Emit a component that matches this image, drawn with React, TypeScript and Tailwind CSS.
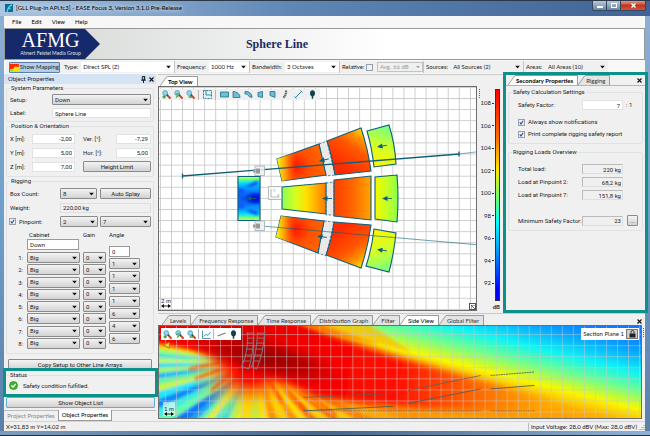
import React from "react";

const TEAL = "#0f5f78";

/* ---------- shared controls ---------- */

function Caret() {
  return (
    <svg className="pointer-events-none absolute right-[3px] top-1/2 h-[3px] w-[5px] -translate-y-1/2" viewBox="0 0 5 3" aria-hidden="true">
      <path d="M0 0h5L2.5 3z" fill="#111" />
    </svg>
  );
}

function Combo({ value, label, className = "" }: { value: string; label: string; className?: string }) {
  return (
    <span className={"relative block h-[11px] " + className}>
      <select
        aria-label={label}
        defaultValue={value}
        className="block h-full w-full appearance-none rounded-[1px] border border-[#8b8b8b] bg-linear-to-b from-[#f3f3f3] to-[#d3d3d3] pl-[2px] leading-[8px] text-[#222]"
      >
        <option>{value}</option>
      </select>
      <Caret />
    </span>
  );
}

function Field({ id, label, value, dark = false, className = "" }: { id?: string; label?: string; value: string; dark?: boolean; className?: string }) {
  return (
    <input
      id={id}
      aria-label={label}
      defaultValue={value}
      className={"block min-w-0 border bg-white px-[2px] leading-[8px] text-[#222] " + (dark ? "h-[11px] border-[#9a9a9a] " : "h-[10px] border-[#e0e3e6] ") + className}
    />
  );
}

function Push({ children, className = "border-[#8b8b8b]" }: { children: React.ReactNode; className?: string }) {
  return (
    <button
      type="button"
      className={"h-[11px] rounded-[1px] border bg-linear-to-b from-[#f4f4f4] to-[#d2d2d2] text-center leading-[9px] text-[#222] " + className}
    >
      {children}
    </button>
  );
}

function Tick({ id, checked = true }: { id: string; checked?: boolean }) {
  return (
    <span className="relative block size-[7px] shrink-0">
      <input id={id} type="checkbox" defaultChecked={checked} className="peer block size-[7px] appearance-none border border-[#9aa0a8] bg-[#eef0f3]" />
      <svg className="pointer-events-none absolute inset-0 hidden size-[7px] peer-checked:block" viewBox="0 0 7 7" aria-hidden="true">
        <path d="M1.8 3.4 3 5 5.2 1.7" fill="none" stroke="#2f4f9c" strokeWidth="1.1" />
      </svg>
    </span>
  );
}

function Group({ title, children, className = "", inner = "" }: { title: string; children: React.ReactNode; className?: string; inner?: string }) {
  return (
    <fieldset className={"min-w-0 rounded-[2px] border border-[#dfe2e5] " + className}>
      <legend className="ml-[3px] px-px leading-[8px]">{title}</legend>
      <div className={inner}>{children}</div>
    </fieldset>
  );
}

function Tab({ children, active = false, bold = false }: { children: React.ReactNode; active?: boolean; bold?: boolean }) {
  return (
    <button type="button" role="tab" aria-selected={active} className="flex h-[10px] items-stretch">
      <svg className="-mr-px h-[10px] w-[8px]" viewBox="0 0 8 10" aria-hidden="true">
        <path d="M0 10 6.500 1Q7 .5 8 .5V10z" fill={active ? "#fff" : "#e4e4e4"} />
        <path d="M0 10 6.500 1Q7 .5 8 .5" fill="none" stroke="#8c8c8c" strokeWidth=".8" />
      </svg>
      <span
        className={
          "rounded-tr-[1px] border-t border-r border-[#9a9a9a] pr-[4px] pl-px leading-[9px] " +
          (active ? "bg-white text-black " : "bg-[#e4e4e4] text-[#333] ") +
          (bold ? "font-bold" : "")
        }
      >
        {children}
      </span>
    </button>
  );
}

function CloseButton() {
  return (
    <button type="button" aria-label="Close" className="flex size-[8px] items-center justify-center">
      <svg className="size-[5px]" viewBox="0 0 5 5" aria-hidden="true">
        <path d="M.5.5l4 4M4.500.5l-4 4" stroke="#111" strokeWidth="1.1" />
      </svg>
    </button>
  );
}

/* ---------- tool icons ---------- */

function ToolButton({ label, children }: { label: string; children: React.ReactNode }) {
  return (
    <button type="button" aria-label={label} className="flex h-[11px] w-[12px] items-center justify-center">
      <svg className="size-[9px]" viewBox="0 0 9 9" aria-hidden="true">
        {children}
      </svg>
    </button>
  );
}

function Lens({ mark }: { mark: "plus" | "fit" | "minus" }) {
  return (
    <>
      <path d="M5 5 8 8" stroke="#c5482e" strokeWidth="1.9" strokeLinecap="round" />
      <path d="M4.800 4.500 5.800 5.600" stroke="#3b3b3b" strokeWidth="1.5" />
      <circle cx="3.200" cy="3" r="2.400" fill="#8fd8ea" stroke="#4a9db5" strokeWidth=".8" />
      {mark === "plus" && <path d="M.5 6.800h3.400M2.200 5.200v3.300" stroke="#2f9a36" strokeWidth="1.3" />}
      {mark === "fit" && <path d="M1.500 4.800l3-1.500M2 7.500l3-2.500" stroke="#43a548" strokeWidth="1.1" />}
      {mark === "minus" && <path d="M2.600 7h3.600" stroke="#2f9a36" strokeWidth="1.4" />}
    </>
  );
}

function Mic() {
  return <path d="M4.500.3C6.300.3 7 1.700 7 3.300 7 5 6.200 6 5.200 6.400V8.700H3.800V6.400C2.800 6 2 5 2 3.300 2 1.700 2.700.3 4.500.3z" fill="#123f52" />;
}

const SHAPES: { label: string; d: string }[] = [
  { label: "Rectangle area", d: "M.5 2h8v5h-8z" },
  { label: "Quarter disc area", d: "M1 1.500c4 0 7 2.500 7 6H1z" },
  { label: "Ring area", d: "M1 1.500c4.500-.5 7 2.500 7 6L5 6.500C4.500 5 3 4 1 4z" },
  { label: "Left trapezoid area", d: "M2 2.500 6.500 1.500v6L2 6.500z" },
  { label: "Right trapezoid area", d: "M2 1.500h5v6L2 5.500z" },
];

function Divider() {
  return <span className="mx-[2px] h-[10px] w-px bg-[#b5b5b5]" />;
}

/* ---------- top view ---------- */

type Cell = { d: string; fill: string };

const CELLS: Cell[] = [
  { d: "M277 158 319 143 326 174 282 180z", fill: "url(#hotTop)" },
  { d: "M282 186 326 182V213L282 208z", fill: "url(#hotMid)" },
  { d: "M281 215 324 220 318 252 276 236z", fill: "url(#hotLow)" },
  { d: "M327 140 361 127Q368 148 371 170L335 174Q332 155 327 140z", fill: "url(#midTop)" },
  { d: "M334 179 371 175V219L334 215z", fill: "url(#midMid)" },
  { d: "M334 221 371 224Q368 246 361 267L326 254Q332 238 334 221z", fill: "url(#midLow)" },
  { d: "M367 130 389 124Q395 143 396 163L374 166Q372 147 367 130z", fill: "url(#farTop)" },
  { d: "M375 176 397 174Q399 197 397 221L375 218z", fill: "url(#farMid)" },
  { d: "M374 228 396 232Q394 252 389 271L366 265Q372 247 374 228z", fill: "url(#farLow)" },
];

const ARROWS: [number, number, number][] = [
  [246, 197.5, 0],
  [322, 197.5, 0],
  [319, 160, -12],
  [317, 235, 8],
  [377, 146, -10],
  [382, 197.5, 0],
  [377, 248.500, 8],
];

function TopView() {
  return (
    <svg className="absolute inset-0 size-full" viewBox="158 86 319 223" preserveAspectRatio="xMidYMid slice" role="img" aria-label="Top view sound pressure map">
      <defs>
        <pattern id="topGrid" x="171" y="97" width="11.070" height="11.100" patternUnits="userSpaceOnUse">
          <path d="M.5 0V11.100M0 .5H11.070" stroke="#c9c9c9" strokeWidth=".9" />
        </pattern>
        <radialGradient id="hotTop" gradientUnits="userSpaceOnUse" cx="296" cy="165" r="36">
          <stop offset="0" stopColor="#ff1800" />
          <stop offset=".4" stopColor="#ff5000" />
          <stop offset="1" stopColor="#ff7000" />
        </radialGradient>
        <linearGradient id="hotEdge">
          <stop offset="0" stopColor="#f4ff20" />
          <stop offset=".18" stopColor="#ffb000" stopOpacity=".8" />
          <stop offset=".38" stopColor="#ff6000" stopOpacity="0" />
        </linearGradient>
        <radialGradient id="hotLow" gradientUnits="userSpaceOnUse" cx="296" cy="228" r="36">
          <stop offset="0" stopColor="#ff1800" />
          <stop offset=".4" stopColor="#ff5000" />
          <stop offset="1" stopColor="#ff7000" />
        </radialGradient>
        <linearGradient id="hotMid">
          <stop offset="0" stopColor="#8cff5a" />
          <stop offset=".3" stopColor="#d4ff20" />
          <stop offset=".55" stopColor="#ffe000" />
          <stop offset="1" stopColor="#ff7a00" />
        </linearGradient>
        <linearGradient id="midTop" gradientUnits="userSpaceOnUse" x1="338" y1="164" x2="364" y2="128">
          <stop offset="0" stopColor="#ff2a00" />
          <stop offset=".5" stopColor="#ff5500" />
          <stop offset=".8" stopColor="#ff9c00" />
          <stop offset="1" stopColor="#ffee00" />
        </linearGradient>
        <linearGradient id="midMid">
          <stop offset="0" stopColor="#ff3e00" />
          <stop offset=".5" stopColor="#ff6500" />
          <stop offset="1" stopColor="#ffa600" />
        </linearGradient>
        <linearGradient id="midLow" gradientUnits="userSpaceOnUse" x1="338" y1="230" x2="364" y2="266">
          <stop offset="0" stopColor="#ff2a00" />
          <stop offset=".5" stopColor="#ff5500" />
          <stop offset=".8" stopColor="#ff9c00" />
          <stop offset="1" stopColor="#ffee00" />
        </linearGradient>
        <linearGradient id="farTop" gradientUnits="userSpaceOnUse" x1="374" y1="166" x2="388" y2="124">
          <stop offset="0" stopColor="#fff200" />
          <stop offset=".5" stopColor="#d2ff28" />
          <stop offset="1" stopColor="#70ff8c" />
        </linearGradient>
        <linearGradient id="farMid">
          <stop offset="0" stopColor="#f4f800" />
          <stop offset=".5" stopColor="#c8ff20" />
          <stop offset="1" stopColor="#8cff50" />
        </linearGradient>
        <linearGradient id="farLow" gradientUnits="userSpaceOnUse" x1="374" y1="228" x2="388" y2="271">
          <stop offset="0" stopColor="#fff200" />
          <stop offset=".5" stopColor="#d2ff28" />
          <stop offset="1" stopColor="#70ff8c" />
        </linearGradient>
        <linearGradient id="coldBox" x2="0" y2="1">
          <stop offset="0" stopColor="#e8ff20" />
          <stop offset=".07" stopColor="#60ff90" />
          <stop offset=".16" stopColor="#00d8ff" />
          <stop offset=".3" stopColor="#0a7cff" />
          <stop offset=".5" stopColor="#0a50f0" />
          <stop offset=".7" stopColor="#0a7cff" />
          <stop offset=".84" stopColor="#00d8ff" />
          <stop offset=".93" stopColor="#60ff90" />
          <stop offset="1" stopColor="#f4f020" />
        </linearGradient>
        <filter id="soften" x="-20%" y="-20%" width="140%" height="140%">
          <feGaussianBlur stdDeviation="1.600" />
        </filter>
        <clipPath id="coldClip">
          <path d="M238 175.500h22v44h-22z" />
        </clipPath>
      </defs>

      <rect x="100" y="0" width="500" height="400" fill="#fff" />
      <rect x="100" y="0" width="500" height="400" fill="url(#topGrid)" />

      <path d="M282 180 371 170V175L282 186zM281 208 371 219V224L281 215z" fill="#fff" />
      <path d="M361 127 367 130Q373 147 374 166L375 176V218L374 228Q372 247 366 265L361 267Q369 244 371 219V175Q368 146 361 127z" fill="#fff" />
      <path d="M319 143 327 140 335 174 326 175zM326 182 334 181V214H326zM324 220 334 221 326 255 318 252z" fill="#e9e9e9" stroke={TEAL} strokeWidth=".7" strokeDasharray="2.500 1.500" />

      {CELLS.map((c) => (
        <path key={c.d} d={c.d} fill={c.fill} stroke={TEAL} strokeWidth="1.100" />
      ))}
      <path d="M277 158 319 143 326 174 282 180z" fill="url(#hotEdge)" />
      <path d="M281 215 324 220 318 252 276 236z" fill="url(#hotEdge)" />

      <path d="M238 175.500h22v44h-22z" fill="url(#coldBox)" />
      <g clipPath="url(#coldClip)">
        <g filter="url(#soften)">
          <ellipse cx="256" cy="197.500" rx="9" ry="5" fill="#0014d8" />
          <path d="M240 190 258 181M240 205 258 213" stroke="#0a30f0" strokeWidth="3" />
          <path d="M243 187 260 188M243 208 260 206" stroke="#00a8ff" strokeWidth="2.500" />
          <path d="M238 195v6" stroke="#1470ff" strokeWidth="4" />
        </g>
      </g>
      <path d="M238 175.500h22v44h-22z" fill="none" stroke={TEAL} strokeWidth="1.100" />

      <g fill="none" stroke="#a9a9a9" strokeWidth=".8">
        <path d="M268.500 185.500h13v13h-13z" fill="#fff" fillOpacity=".7" />
        <path d="M271 196v-8M271 196h8" />
      </g>
      <text x="273" y="191" fontSize="4" fill="#999">Y</text>
      <text x="277" y="196" fontSize="4" fill="#999">X</text>

      <path d="M182.500 175 459.500 153M182.500 172.500v5M459 150.500v5" stroke={TEAL} strokeWidth="1.300" fill="none" />
      <path d="M459 153 480 150.500" stroke={TEAL} strokeWidth=".5" />
      <path d="M265 225.300 480 244" stroke={TEAL} strokeWidth=".6" />

      {[165, 220].map((y) => (
        <g key={y}>
          <rect x="255" y={y} width="9.500" height="9.500" fill="#eee" fillOpacity=".85" stroke="#9bb0b8" strokeWidth=".8" />
          <path d={`M253 ${y + 3.500}h2.500v3h-2.500zM256 ${y + 2.500}h4v5h-4z`} fill="#999" />
        </g>
      ))}

      {ARROWS.map(([x, y, r]) => (
        <g key={x + "-" + y} transform={`translate(${x} ${y}) rotate(${r})`}>
          <path d="M0 0 5.500-2.600V2.600z" fill={TEAL} />
          <path d="M5 0h5" stroke={TEAL} strokeWidth=".9" />
        </g>
      ))}
    </svg>
  );
}

/* ---------- side view ---------- */

// Perimeter points of the side lobes, each with the colour of its lobe.
const LOBES: [number, number, string][] = [
  [-10, 4, "#ff1000"],
  [-10, 14, "#ff3c00"],
  [-10, 18, "#ffd800"],
  [-10, 22, "#a0ff60"],
  [-10, 27, "#28f0e0"],
  [-10, 33, "#c0ff40"],
  [-10, 38, "#18d8ff"],
  [-10, 43, "#a0ff60"],
  [-10, 49, "#18b8ff"],
  [-10, 55, "#60f8a8"],
  [-10, 62, "#c8f840"],
  [-10, 69, "#20e8ff"],
  [-10, 78, "#1088ff"],
  [-10, 88, "#30f0e8"],
  [-10, 98, "#60ffb0"],
  [0, 104, "#0c78ff"],
  [18, 104, "#18a8ff"],
  [29, 104, "#60f8b0"],
  [38, 104, "#e8f020"],
  [47, 104, "#40f4d0"],
  [57, 104, "#20e0f8"],
  [65, 104, "#a0ff60"],
  [74, 104, "#f0f010"],
  [81, 104, "#ffe000"],
  [90, 104, "#b8f840"],
  [102, 104, "#ffe800"],
  [112, 104, "#ff8800"],
  [123, 104, "#ffd000"],
  [136, 104, "#ff9000"],
  [147, 104, "#ffe000"],
  [158, 104, "#ff7000"],
  [170, 104, "#ffd000"],
  [184, 104, "#ff6800"],
  [196, 104, "#ffc800"],
  [214, 104, "#ff8400"],
  [236, 104, "#ffa800"],
  [270, 104, "#ff9400"],
  [310, 104, "#ff9400"],
];

function SideView() {
  return (
    <svg className="absolute inset-0 size-full" viewBox="0 0 484 94" preserveAspectRatio="xMidYMid slice" role="img" aria-label="Side view sound pressure map">
      <defs>
        <linearGradient id="field" gradientUnits="userSpaceOnUse" x1="440" y1="0" x2="416.500" y2="94">
          <stop offset="0" stopColor="#0f78ff" />
          <stop offset=".16" stopColor="#08a4ff" />
          <stop offset=".38" stopColor="#10f4f4" />
          <stop offset=".56" stopColor="#70ff8c" />
          <stop offset=".74" stopColor="#f8f800" />
          <stop offset=".9" stopColor="#ffb000" />
          <stop offset="1" stopColor="#ffa000" />
        </linearGradient>
        <radialGradient id="near" gradientUnits="userSpaceOnUse" cx="92" cy="36" r="64">
          <stop offset="0" stopColor="#e00000" />
          <stop offset=".32" stopColor="#f81000" />
          <stop offset=".48" stopColor="#ff5800" stopOpacity=".8" />
          <stop offset=".7" stopColor="#ffb800" stopOpacity=".4" />
          <stop offset="1" stopColor="#ffe000" stopOpacity="0" />
        </radialGradient>
        <radialGradient id="core" gradientUnits="userSpaceOnUse" cx="0" cy="0" r="1" gradientTransform="translate(108 32) rotate(14) scale(90 24)">
          <stop offset="0" stopColor="#980000" />
          <stop offset=".45" stopColor="#b00000" stopOpacity=".9" />
          <stop offset=".75" stopColor="#d80000" stopOpacity=".5" />
          <stop offset="1" stopColor="#ff0000" stopOpacity="0" />
        </radialGradient>
        <linearGradient id="beam" gradientUnits="userSpaceOnUse" x1="0" y1="0" x2="400" y2="60">
          <stop offset="0" stopColor="#f40000" />
          <stop offset=".15" stopColor="#d80000" />
          <stop offset=".35" stopColor="#f00000" />
          <stop offset=".6" stopColor="#ff0c00" />
          <stop offset=".72" stopColor="#ff4600" />
          <stop offset=".85" stopColor="#ff7a00" />
          <stop offset="1" stopColor="#ff9c00" stopOpacity=".3" />
        </linearGradient>
        <filter id="blurLobe" x="-10%" y="-20%" width="120%" height="140%">
          <feGaussianBlur stdDeviation="1.500" />
        </filter>
        <filter id="blurBeam" x="-10%" y="-20%" width="120%" height="140%">
          <feGaussianBlur stdDeviation="3.500" />
        </filter>
        <pattern id="sideGrid" x="6" y="9" width="11.070" height="11.100" patternUnits="userSpaceOnUse">
          <path d="M.5 0V11.100M0 .5H11.070" stroke="#c8c8c8" strokeOpacity=".55" strokeWidth=".9" />
        </pattern>
      </defs>

      <rect x="-50" y="-50" width="600" height="200" fill="url(#field)" />

      <g filter="url(#blurLobe)">
        {LOBES.slice(0, -1).map(([x, y, color], i) => (
          <path key={i} d={`M98 38 ${x} ${y} ${LOBES[i + 1][0]} ${LOBES[i + 1][1]}z`} fill={color} />
        ))}
      </g>
      <rect x="-50" y="-50" width="600" height="200" fill="url(#near)" />

      <g filter="url(#blurBeam)">
        <path d="M-20-20H105L170 8 240 32 320 54 400 76 350 88 270 84 200 78 158 72 120 54 88 46 60 32 25 20-20 11z" fill="url(#beam)" />
      </g>
      <g filter="url(#blurLobe)">
        <path d="M118-8 150-8 222 20 170 9z" fill="#ff7000" opacity=".8" />
        <path d="M146-8 200-8 254 27 195 12z" fill="#ffb800" opacity=".7" />
        <path d="M108 50 124 78M116 50 148 86M124 52 178 90M78 44 52 66M74 40 36 54M70 36 30 44" stroke="#ff3000" strokeWidth="3" opacity=".7" />
      </g>
      <rect x="-50" y="-50" width="600" height="200" fill="url(#core)" />

      <rect x="-50" y="-50" width="600" height="200" fill="url(#sideGrid)" />

      <g fill="none" stroke="#7e7e86" strokeWidth="1">
        <path d="M89 7Q90 26 83 42M95 8Q95 28 90 44M99 7Q98 28 93 42M106 8Q105 28 98 44" />
        <path d="M88 8h8M89 13h7M88 18h7M87 24h7M86 30h7M85 36h6M83 41l7 3M99 8h7M99 13h7M98 18h7M97 24h7M96 30h7M94 36h7M92 41l6 3" />
      </g>

      <g stroke="#55605c" strokeWidth=".9" fill="none">
        <path d="M145 72.500 235 68.500" strokeDasharray="2 .6" />
        <path d="M145 86 235 81.500" />
        <path d="M145 86H323M333 86H377" strokeDasharray="1.500 1" opacity=".8" />
        <path d="M250 65.500 323 50.500M333 50.500 377 47" strokeDasharray="2 .6" />
        <path d="M250 78.500 323 64M333 64 377 60.500" />
      </g>

      <path d="M4.500 20 10.500 17v6z" fill="#ffd83a" fillOpacity=".8" stroke="#7a7030" strokeWidth=".7" />
    </svg>
  );
}

function ScaleMark({ text }: { text: string }) {
  return (
    <div className="flex flex-col items-center leading-[6px] text-[#222]">
      <span>{text}</span>
      <svg className="h-[4px] w-[10px]" viewBox="0 0 10 4" aria-hidden="true">
        <path d="M0 2 3 0V4zM10 2 7 0V4z" fill="#111" />
        <path d="M1 2h8" stroke="#111" strokeWidth=".9" />
      </svg>
    </div>
  );
}

function Gripper({ className }: { className: string }) {
  return <span className={"absolute h-[9px] w-px border-l border-dotted border-[#666] " + className} />;
}

/* ---------- toolbar ---------- */

function ToolbarPick({ id, label, value, gap, width, white = false }: { id: string; label: string; value: string; gap: string; width: string; white?: boolean }) {
  return (
    <div className={"flex h-[12px] items-center border-r border-[#c3c3c3] pl-[2px] " + gap}>
      <label htmlFor={id} className="shrink-0 pr-[3px]">{label}</label>
      <span className={"relative ml-auto block h-[10px] " + width}>
        <select id={id} defaultValue={value} className={"block h-full w-full appearance-none pl-[2px] leading-[10px] " + (white ? "bg-white" : "bg-transparent")}>
          <option>{value}</option>
        </select>
        <Caret />
      </span>
    </div>
  );
}

const CABINETS = ["1", "2", "3", "4", "5", "6", "7", "8"];
const ANGLES = ["1", "1", "1", "1", "6", "4", "6"];
const LEVELS = ["108", "106", "104", "102", "100", "98", "96", "94", "92"];
const LOADS: [string, string][] = [
  ["Total load:", "220 kg"],
  ["Load at Pinpoint 2:", "68,2 kg"],
  ["Load at Pinpoint 7:", "151,8 kg"],
];

function ObjectProperties() {
  return (
    <aside className="relative flex w-[152px] shrink-0 flex-col bg-[#f0f0f0] font-['Roboto','Liberation_Sans',sans-serif]">
      <header className="flex h-[10px] items-center bg-[#d5e4f4] pr-px pl-[4px] font-['Lato',sans-serif]">
        <h2 className="flex-1">Object Properties</h2>
        <button type="button" aria-label="Pin" className="flex size-[8px] items-center justify-center">
          <svg className="h-[7px] w-[5px]" viewBox="0 0 5 7" aria-hidden="true">
            <path d="M1.300.5h2.400V4H1.300zM.2 4.200h4.600M2.500 4.200V7M3.300.5V4" fill="none" stroke="#111" strokeWidth=".9" />
          </svg>
        </button>
        <CloseButton />
      </header>

      <Group title="System Parameters" className="mx-[2px]" inner="px-[2px] pb-[3px]">
        <div className="flex flex-col gap-[3px] pt-[2px]">
          <div className="flex items-center">
            <span className="w-[43px] pl-px">Setup:</span>
            <Combo label="Setup" value="Down" className="flex-1" />
          </div>
          <div className="flex items-center">
            <label htmlFor="obj-label" className="w-[43px] pl-px">Label:</label>
            <Field id="obj-label" value="Sphere Line" className="flex-1" />
          </div>
        </div>
      </Group>

      <Group title="Position & Orientation" className="mx-[2px]" inner="px-[2px] pb-[4px]">
        <div className="flex flex-col gap-[3px] pt-[3px]">
          {[
            ["X [m]:", "-2,00", "Ver. [°]:", "-7,29"],
            ["Y [m]:", "5,00", "Hor. [°]:", "5,00"],
            ["Z [m]:", "7,00", "", ""],
          ].map(([a, av, b, bv]) => (
            <div key={a} className="flex h-[11px] items-center">
              <label htmlFor={"pos" + a[0]} className="w-[23px] pl-px">{a}</label>
              <Field id={"pos" + a[0]} value={av} className="w-[43px] text-right" />
              {b ? (
                <>
                  <label htmlFor={"rot" + b[0]} className="ml-[8px] w-[33px]">{b}</label>
                  <Field id={"rot" + b[0]} value={bv} className="flex-1 text-right" />
                </>
              ) : (
                <Push className="ml-[8px] flex-1 border-[#8b8b8b]">Height Limit</Push>
              )}
            </div>
          ))}
        </div>
      </Group>

      <Group title="Rigging" className="mx-[2px]" inner="px-[2px] pb-[4px]">
        <div className="flex flex-col gap-[3px] pt-[3px]">
          <div className="flex items-center">
            <span className="w-[51px] pl-px">Box Count:</span>
            <Combo label="Box Count" value="8" className="w-[37px]" />
            <Push className="ml-[3px] flex-1 border-[#8b8b8b]">Auto Splay</Push>
          </div>
          <div className="flex h-[11px] items-center">
            <label htmlFor="weight" className="w-[51px] pl-px">Weight:</label>
            <input id="weight" readOnly value="220,00 kg" className="block h-[10px] min-w-0 flex-1 border border-[#dcdfe2] bg-[#f0f0f0] px-[2px] text-[#222]" />
          </div>
          <div className="flex items-center">
            <Tick id="pin" />
            <label htmlFor="pin" className="w-[44px] pl-[3px]">Pinpoint:</label>
            <Combo label="First pinpoint" value="2" className="w-[38px]" />
            <Combo label="Second pinpoint" value="7" className="ml-[2px] flex-1" />
          </div>
        </div>

        <div className="mt-[3px] flex pl-[3px]">
          <div className="flex h-[119px] w-[15px] flex-col justify-between pt-[22px]">
            {CABINETS.map((n) => (
              <span key={n} className="h-[11px] pr-[4px] text-right leading-[11px]">{n}:</span>
            ))}
          </div>
          <div className="flex w-[53px] flex-col">
            <span className="h-[9px] pl-[2px] leading-[9px]">Cabinet</span>
            <Field dark label="Frame" value="Down" className="w-[52px]" />
            <div className="mt-[2px] flex h-[97px] flex-col justify-between">
              {CABINETS.map((n) => (
                <Combo key={n} label={"Cabinet " + n} value="Big" />
              ))}
            </div>
          </div>
          <div className="ml-[3px] flex w-[23px] flex-col">
            <span className="h-[22px] leading-[9px]">Gain</span>
            <div className="flex h-[97px] flex-col justify-between">
              {CABINETS.map((n) => (
                <Combo key={n} label={"Gain " + n} value="0" />
              ))}
            </div>
          </div>
          <div className="ml-[3px] flex w-[31px] flex-col">
            <span className="h-[16px] leading-[9px]">Angle</span>
            <Field dark label="Frame angle" value="0" className="w-[21px]" />
            <div className="mt-px flex h-[86px] flex-col justify-between">
              {ANGLES.map((a, i) => (
                <Combo key={i} label={"Angle " + (i + 2)} value={a} />
              ))}
            </div>
          </div>
        </div>
      </Group>

      <Push className="mx-[4px] mt-auto shrink-0 border-[#8b8b8b]">Copy Setup to Other Line Arrays</Push>
      <section className="relative -mt-[2px] -mr-[2px] -ml-px h-[29px] shrink-0 border-[3px] border-[#0c918a] bg-[#f0f0f0]">
        <Group title="Status" className="border-x-0 border-b-0">
          <p className="flex items-center gap-[5px] pt-[2px] pl-[3px]">
            <svg className="size-[9px]" viewBox="0 0 9 9" aria-hidden="true">
              <circle cx="4.500" cy="4.500" r="4" fill="#3fb528" stroke="#2a8a18" strokeWidth=".7" />
              <path d="M2.400 4.500 4 6.200 6.700 3" fill="none" stroke="#fff" strokeWidth="1.200" />
            </svg>
            Safety condition fulfilled.
          </p>
        </Group>
      </section>
      <Push className="mr-px ml-[2px] shrink-0 border-[#5fb0d8]">Show Object List</Push>
      <div role="tablist" className="mt-[2px] flex h-[11px] shrink-0 border-t border-[#bdbdbd] font-['Lato',sans-serif]">
        <button type="button" role="tab" aria-selected="false" className="w-[54px] text-center text-[#888]">Project Properties</button>
        <button type="button" role="tab" aria-selected="true" className="-mt-px w-[54px] border border-t-0 border-[#999] bg-white text-center text-black">Object Properties</button>
      </div>
    </aside>
  );
}

const READONLY = "block h-[10px] w-[41px] shrink-0 border border-t-[#bbb] border-r-[#dcdfe2] border-b-[#dcdfe2] border-l-[#bbb] bg-[#f0f0f0] px-px text-right text-[#222]";

function SecondaryProperties() {
  return (
    <section className="relative -mt-[2px] -mr-[3px] -mb-[2px] flex w-[145px] shrink-0 flex-col border-[3px] border-[#0c918a] bg-[#f0f0f0]">
      <div role="tablist" className="flex h-[11px] items-end border-b border-[#b5b5b5] pl-[2px]">
        <Tab active bold>Secondary Properties</Tab>
        <Tab>Rigging</Tab>
        <span className="ml-auto pr-[2px] pb-px"><CloseButton /></span>
      </div>
      <div className="font-['Roboto','Liberation_Sans',sans-serif]">
        <Group title="Safety Calculation Settings" className="mx-[2px] mt-[2px]" inner="pr-[3px] pl-[9px] pb-[5px]">
          <div className="flex items-center pt-[4px]">
            <label htmlFor="sf" className="w-[64px] shrink-0">Safety Factor:</label>
            <Field id="sf" value="7" className="w-[41px] text-right" />
            <span className="pl-[3px]">: 1</span>
          </div>
          <div className="flex items-center gap-[3px] pt-[8px]">
            <Tick id="notify" />
            <label htmlFor="notify">Always show notifications</label>
          </div>
          <div className="flex items-center gap-[3px] pt-[4px]">
            <Tick id="report" />
            <label htmlFor="report">Print complete rigging safety report</label>
          </div>
        </Group>
        <Group title="Rigging Loads Overview" className="mx-[2px] mt-[4px]" inner="pr-[3px] pl-[9px] pb-[4px]">
          <div className="flex flex-col gap-[3px] pt-[8px]">
            {LOADS.map(([name, value], i) => (
              <div key={name} className="flex items-center">
                <label htmlFor={"load" + i} className="w-[64px] shrink-0">{name}</label>
                <input id={"load" + i} readOnly value={value} className={READONLY} />
              </div>
            ))}
            <div className="flex items-center pt-[12px]">
              <label htmlFor="minsf" className="w-[64px] shrink-0">Minimum Safety Factor:</label>
              <input id="minsf" readOnly value="23" className={READONLY} />
              <Push className="ml-[4px] w-[11px] shrink-0 border-[#8b8b8b]">...</Push>
            </div>
          </div>
        </Group>
      </div>
    </section>
  );
}

export default function App() {
  return (
    <div className="flex h-screen min-h-[436px] flex-col overflow-hidden bg-linear-to-b from-[#8fb0d3] via-[#6f9ecb] to-[#5b7fa8] font-['Lato','Liberation_Sans',sans-serif] text-[6px] leading-[8px] whitespace-nowrap text-[#222]">
      <header className="flex h-[16px] shrink-0 items-start border-t border-[#2a3848] bg-linear-to-r from-[#a9c6e2] via-[#5f86b5] via-45% to-[#3f6395] pl-[4px]">
        <svg className="mt-[3px] ml-px size-[8px]" viewBox="0 0 8 8" aria-hidden="true">
          <path d="M0 0h8v8H0z" fill="#0e6c8c" />
          <path d="M2 8C3 5 3 2 7 1M2.500 4.500h3" fill="none" stroke="#55d8ee" strokeWidth="1.300" />
        </svg>
        <h1 className="mt-[2px] ml-[3px] leading-[10px] text-black [text-shadow:0_0_4px_#fff,0_0_8px_#fff]">[GLL Plug-In API.fc3] - EASE Focus 3, Version 3.1.0 Pre-Release</h1>
        <div className="mr-[4px] ml-auto flex h-[10px] overflow-hidden rounded-b-[2px] border border-t-0 border-[#33475f]">
          <button type="button" aria-label="Minimize" className="flex w-[14px] items-end justify-center border-r border-[#33475f] bg-linear-to-b from-[#b9c8da] to-[#6884a8] pb-[2px]">
            <span className="h-[2px] w-[6px] bg-white" />
          </button>
          <button type="button" aria-label="Maximize" className="flex w-[14px] items-center justify-center border-r border-[#33475f] bg-linear-to-b from-[#b9c8da] to-[#6884a8]">
            <span className="h-[5px] w-[6px] border border-white" />
          </button>
          <button type="button" aria-label="Close window" className="flex w-[24px] items-center justify-center bg-linear-to-b from-[#e09a8c] via-[#c4321c] to-[#d2553c]">
            <svg className="size-[5px]" viewBox="0 0 5 5" aria-hidden="true"><path d="M.5.5l4 4M4.500.5l-4 4" stroke="#fff" strokeWidth="1.400" /></svg>
          </button>
        </div>
      </header>

      <div className="mr-[5px] ml-[4px] flex min-h-0 flex-1 flex-col bg-[#f0f0f0]">
        <nav className="flex h-[12px] shrink-0 items-center gap-[10px] bg-[#f7f7f7] pl-[8px] text-black">
          {["File", "Edit", "View", "Help"].map((m) => (
            <button key={m} type="button">{m}</button>
          ))}
        </nav>

        <div className="flex h-[32px] shrink-0 items-stretch border border-[#999] bg-linear-to-r from-[#d2d7d3] via-[#e4e7e5] via-25% to-white to-60%">
          <div className="relative w-[95px] shrink-0">
            <svg className="absolute inset-0 size-full" viewBox="0 0 95 30" preserveAspectRatio="none" aria-hidden="true">
              <path d="M0 0H80L95 15 80 30H0z" fill="#16296b" />
            </svg>
            <div className="relative flex w-[91px] flex-col items-center pt-px text-white">
              <span className="font-['Liberation_Serif',serif] text-[20px] leading-[21px]">AFMG</span>
              <span className="text-[5px] leading-[5px] text-[#dfe3f2]">Ahnert Feistel Media Group</span>
            </div>
          </div>
          <div className="flex flex-1 items-center justify-center pr-[190px] font-['Liberation_Serif',serif] text-[12px] leading-[14px] font-bold text-[#1b2a66]">Sphere Line</div>
        </div>

        <div role="toolbar" className="flex h-[14px] shrink-0 items-center bg-[#f8f8f8] pl-[2px]">
          <div className="flex h-[12px] items-center bg-[#f0f0f0] pl-[3px]">
            <button type="button" className="flex h-[11px] w-[51px] items-center justify-center gap-px rounded-[1px] border border-[#5b7ea6] bg-[#b3cde8]">
              <svg className="h-[7px] w-[9px]" viewBox="0 0 9 7" aria-hidden="true">
                <path d="M0 0h9v7H0z" fill="#f4e800" />
                <path d="M0 0h9v3L5 2.500 3 5H0z" fill="#ff2a00" />
                <path d="M0 5l4 2H0z" fill="#6fe040" />
              </svg>
              Show Mapping
            </button>
            <ToolbarPick id="tType" label="Type:" value="Direct SPL (Z)" gap="ml-[2px] w-[113px]" width="w-[94px]" white />
            <ToolbarPick id="tFreq" label="Frequency:" value="1000 Hz" gap="w-[75px]" width="w-[41px]" white />
            <ToolbarPick id="tBand" label="Bandwidth:" value="3 Octaves" gap="w-[90px]" width="w-[57px]" white />
            <div className="flex h-[12px] w-[84px] items-center border-r border-[#c3c3c3] pl-[2px]">
              <label htmlFor="rel" className="pr-[2px]">Relative:</label>
              <Tick id="rel" checked={false} />
              <span className="relative ml-auto block h-[10px] w-[46px]">
                <select aria-label="Relative level" disabled defaultValue="Avg. ±6 dB" className="block h-full w-full appearance-none border border-[#c3c3c3] bg-[#f0f0f0] pl-[2px] leading-[8px] text-[#999] opacity-100">
                  <option>Avg. ±6 dB</option>
                </select>
                <svg className="pointer-events-none absolute top-[4px] right-[3px] h-[2px] w-[4px]" viewBox="0 0 4 2" aria-hidden="true"><path d="M0 0h4L2 2z" fill="#999" /></svg>
              </span>
            </div>
            <ToolbarPick id="tSrc" label="Sources:" value="All Sources (2)" gap="w-[100px]" width="w-[73px]" />
            <ToolbarPick id="tArea" label="Areas:" value="All Areas (10)" gap="w-[84px] border-r-0" width="w-[62px]" />
          </div>
        </div>

        <main className="flex min-h-0 flex-1">
          <ObjectProperties />

          <div className="ml-[2px] flex min-w-0 flex-1 flex-col">
            <div className="flex min-h-0 flex-1">
              <div className="flex min-w-0 flex-1 flex-col">
                <div role="tablist" className="flex h-[12px] shrink-0 items-end border-t border-[#c9c9c9] pl-[2px]">
                  <Tab active bold>Top View</Tab>
                </div>
                <div className="flex min-h-0 flex-1">
                  <div className="relative min-w-0 flex-1 border border-[#6d6d6d]">
                    <TopView />
                    <div className="absolute top-[2px] left-px flex h-[11px] items-center bg-[#f0f0f0] pr-[2px]">
                      <ToolButton label="Zoom in"><Lens mark="plus" /></ToolButton>
                      <ToolButton label="Zoom to fit"><Lens mark="fit" /></ToolButton>
                      <ToolButton label="Zoom out"><Lens mark="minus" /></ToolButton>
                      <Divider />
                      <ToolButton label="Select">
                        <path d="M.5.5h8v8h-8z" fill="#d9f1f7" stroke="#2b6f86" strokeWidth=".9" strokeDasharray="2 1" />
                        <path d="M3 0v5h6" fill="none" stroke="#2b6f86" strokeWidth=".8" />
                      </ToolButton>
                      <Divider />
                      {SHAPES.map((s) => (
                        <ToolButton key={s.label} label={s.label}>
                          <path d={s.d} fill="#6fbdd6" stroke="#1f6d88" strokeWidth=".8" />
                        </ToolButton>
                      ))}
                      <ToolButton label="Line array"><path d="M6 .5Q6.500 5 3 8" fill="none" stroke="#666" strokeWidth="2.200" strokeDasharray="1.600 .5" /></ToolButton>
                      <span className="w-[2px]" />
                      <ToolButton label="Section line">
                        <path d="M1.500 7.500 7.500 1.500M.5 6.500l2 2M6.500.5l2 2" stroke="#2b7f9a" strokeWidth="1" />
                      </ToolButton>
                      <span className="w-[2px]" />
                      <ToolButton label="Microphone"><Mic /></ToolButton>
                    </div>
                    <div className="absolute bottom-[2px] left-[2px]"><ScaleMark text="2 m" /></div>
                    <button type="button" aria-label="Fit view" className="absolute right-0 bottom-0 flex size-[7px] items-center justify-center border border-[#555] bg-white">
                      <svg className="size-[4px]" viewBox="0 0 4 4" aria-hidden="true"><path d="M0 4V0h4M0 0l4 4" fill="none" stroke="#333" strokeWidth=".8" /></svg>
                    </button>
                  </div>
                  <div className="relative flex w-[26px] shrink-0 justify-end gap-px pr-[3px] pb-[10px]">
                    <Gripper className="top-[3px] left-[2px]" />
                    <ol className="flex flex-col justify-between pt-[13px] pb-[14px] text-right">
                      {LEVELS.map((l) => (
                        <li key={l} className="flex h-[8px] items-center justify-end gap-px">{l}<span className="h-px w-[2px] bg-[#333]" /></li>
                      ))}
                    </ol>
                    <div className="mt-[3px] w-[5px] border border-[#333] bg-[linear-gradient(180deg,#ff0000_0%,#ff6a00_22%,#ffe800_38%,#80ff60_50%,#00ffff_63%,#0090ff_78%,#0000ff_95%)]" />
                    <span className="absolute right-[3px] bottom-0 font-bold">dB</span>
                  </div>
                </div>
              </div>
              <SecondaryProperties />
            </div>

            <div role="tablist" className="mt-[2px] flex h-[12px] shrink-0 items-end border-t border-[#c9c9c9] pl-[4px]">
              <Tab>Levels</Tab>
              <Tab>Frequency Response</Tab>
              <Tab>Time Response</Tab>
              <Tab>Distribution Graph</Tab>
              <Tab>Filter</Tab>
              <Tab active>Side View</Tab>
              <Tab>Global Filter</Tab>
              <span className="ml-auto pr-[2px]"><CloseButton /></span>
            </div>
            <div className="relative mr-[3px] mb-[2px] h-[94px] shrink-0">
              <div className="absolute inset-0 overflow-hidden border border-[#6d6d6d]">
                <SideView />
                <div className="absolute top-[2px] left-[2px] flex h-[12px] items-center bg-white pr-[2px]">
                  <ToolButton label="Zoom in"><Lens mark="plus" /></ToolButton>
                  <ToolButton label="Zoom to fit"><Lens mark="fit" /></ToolButton>
                  <ToolButton label="Zoom out"><Lens mark="minus" /></ToolButton>
                  <span className="mx-px h-[10px] w-px bg-[#b5b5b5]" />
                  <ToolButton label="Graph"><path d="M.5.5v8h8M1.500 6.500 4 4.500l2 .8L8.500 2" fill="none" stroke="#3b8ba3" strokeWidth=".9" /></ToolButton>
                  <span className="mx-px h-[10px] w-px bg-[#b5b5b5]" />
                  <ToolButton label="Line"><path d="M.5 6 8.500 3" stroke="#777" strokeWidth="1.100" /></ToolButton>
                  <ToolButton label="Microphone"><Mic /></ToolButton>
                </div>
                <div className="absolute bottom-[2px] left-[4px] bg-white/60 pt-[4px] pr-px pl-px"><ScaleMark text="1 m" /></div>
                <div className="absolute top-[2px] right-[2px] flex h-[12px] items-center gap-[2px] bg-white pr-px pl-[2px]">
                  Section Plane 1
                  <button type="button" aria-label="Lock plane" className="flex h-[10px] w-[12px] items-center justify-center border border-[#777] bg-[#cfcfcf]">
                    <svg className="h-[8px] w-[7px]" viewBox="0 0 7 8" aria-hidden="true">
                      <path d="M.5 3.500h6v4h-6z" fill="#222" />
                      <path d="M2 3.500V2a1.500 1.500 0 013 0v1.500" fill="none" stroke="#222" strokeWidth=".9" />
                    </svg>
                  </button>
                </div>
              </div>
              <Gripper className="top-[3px] -right-[2px]" />
            </div>
          </div>
        </main>

        <footer className="flex h-[10px] shrink-0 items-center justify-between border-t border-[#d5d5d5] pl-[2px]">
          <span>X=31,83 m Y=14,02 m</span>
          <span className="flex items-center gap-[2px] border-l border-[#bbb] pl-[2px]">
            Input Voltage: 28,0 dBV (Max: 28,0 dBV)
            <svg className="size-[6px]" viewBox="0 0 6 6" aria-hidden="true"><path d="M5 1v1M5 3v1M5 5v1M3 3v1M3 5v1M1 5v1" stroke="#888" strokeWidth="1" /></svg>
          </span>
        </footer>
      </div>
      <div className="h-[5px] shrink-0 border-b border-[#22303f] bg-linear-to-r from-[#7d9dc0] via-[#46668c] to-[#8fb3d6]" />
    </div>
  );
}
